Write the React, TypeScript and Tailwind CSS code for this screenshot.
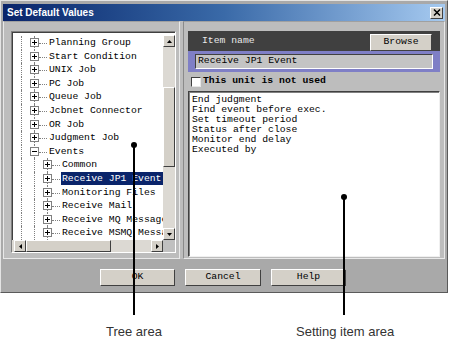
import React from "react"

const mono = "font-['Liberation_Mono',monospace] text-[9.75px]"

function PlusBox({ open }: { open?: boolean }) {
  return (
    <svg width="9" height="9" viewBox="0 0 9 9" className="block">
      <rect x="0.5" y="0.5" width="8" height="8" fill="#fff" stroke="#808080" />
      <path d="M2 4.5h5" stroke="#000" />
      {!open && <path d="M4.5 2v5" stroke="#000" />}
    </svg>
  )
}

type Node = { label: string; level: 0 | 1; open?: boolean; selected?: boolean }

const nodes: Node[] = [
  { label: "Planning Group", level: 0 },
  { label: "Start Condition", level: 0 },
  { label: "UNIX Job", level: 0 },
  { label: "PC Job", level: 0 },
  { label: "Queue Job", level: 0 },
  { label: "Jcbnet Connector", level: 0 },
  { label: "OR Job", level: 0 },
  { label: "Judgment Job", level: 0 },
  { label: "Events", level: 0, open: true },
  { label: "Common", level: 1 },
  { label: "Receive JP1 Event", level: 1, selected: true },
  { label: "Monitoring Files", level: 1 },
  { label: "Receive Mail", level: 1 },
  { label: "Receive MQ Message", level: 1 },
  { label: "Receive MSMQ Message", level: 1 },
]

function TreeRow({ node }: { node: Node }) {
  const child = node.level === 1
  return (
    <div className="relative h-[13.6px] whitespace-nowrap">
      <div className="absolute left-[9px] top-0 bottom-0 border-l border-dotted border-[#808080]" />
      <div className="absolute left-[22px] top-0 bottom-0 border-l border-dotted border-[#808080]" />
      {child && (
        <div className="absolute left-[35px] top-0 bottom-0 border-l border-dotted border-[#808080]" />
      )}
      <div
        className={
          child
            ? "absolute left-[40px] w-[8px] top-[7px] border-t border-dotted border-[#808080]"
            : "absolute left-[27px] w-[8px] top-[7px] border-t border-dotted border-[#808080]"
        }
      />
      <div className={child ? "absolute left-[31px] top-[2px]" : "absolute left-[18px] top-[2px]"}>
        <PlusBox open={node.open} />
      </div>
      <div
        className={
          (child ? "absolute left-[49px] top-0 " : "absolute left-[36px] top-0 ") +
          "h-[13px] leading-[13px] px-[1px] " +
          (node.selected ? "bg-[#0a246a] text-white pr-[20px]" : "text-black")
        }
      >
        {node.label}
      </div>
    </div>
  )
}

function ArrowBtn({ dir }: { dir: "up" | "down" | "left" | "right" }) {
  const d =
    dir === "up"
      ? "M2 6h5L4.5 3z"
      : dir === "down"
      ? "M2 3h5L4.5 6z"
      : dir === "left"
      ? "M6 2v5L3 4.5z"
      : "M3 2v5L6 4.5z"
  return (
    <div className="w-[12px] h-[12px] shrink-0 bg-[#d4d0c8] border border-t-white border-l-white border-r-[#404040] border-b-[#404040] flex items-center justify-center">
      <svg width="9" height="9" viewBox="0 0 9 9">
        <path d={d} fill="#000" />
      </svg>
    </div>
  )
}

function Button({ children, w }: { children: React.ReactNode; w: string }) {
  return (
    <div
      className={
        w +
        " h-[17px] bg-[#d4d0c8] border border-t-white border-l-white border-r-[#404040] border-b-[#404040] flex items-center justify-center text-black " +
        mono
      }
    >
      {children}
    </div>
  )
}

export default function App() {
  return (
    <div className="relative w-[451px] h-[349px] bg-white overflow-hidden">
      {/* dialog */}
      <div className="w-[448px] h-[293px] bg-[#a9a9a9] border border-t-[#e4e4e4] border-l-[#e4e4e4] border-r-[#5a5a5a] border-b-[#5a5a5a] px-[2px] pt-[3px] flex flex-col">
        <div className="h-[17px] bg-linear-to-r from-[#0a246a] via-[#3a6aa8] to-[#a6caf0] flex items-center justify-between pl-[4px] pr-[2px]">
          <span className="text-white font-bold text-[10px] font-['Liberation_Sans',Arial,sans-serif]">
            Set Default Values
          </span>
          <div className="w-[13px] h-[12px] bg-[#d4d0c8] border border-t-white border-l-white border-r-[#404040] border-b-[#404040] flex items-center justify-center">
            <svg width="8" height="7" viewBox="0 0 8 7">
              <path d="M1 0.5l6 6M7 0.5l-6 6" stroke="#000" strokeWidth="1.5" />
            </svg>
          </div>
        </div>

        {/* body */}
        <div className="h-[238px] flex bg-[#bdbdbd]">
          {/* tree area */}
          <div className="w-[177px] h-full border border-t-[#a0a0a0] border-l-[#e8e8e8] border-r-[#e8e8e8] border-b-[#e8e8e8] pt-[9px] pl-[7px]">
            <div className="w-[165px] h-[222px] border border-t-[#808080] border-l-[#808080] border-r-white border-b-white shadow-[inset_1px_1px_0_#404040] flex flex-col bg-white">
              <div className="flex h-[208px]">
                <div className={"flex-1 overflow-hidden pt-[4px] " + mono}>
                  {nodes.map((n) => (
                    <TreeRow key={n.label} node={n} />
                  ))}
                </div>
                <div className="w-[12px] flex flex-col bg-[#dcd9d3] mt-[3px]">
                  <ArrowBtn dir="up" />
                  <div className="h-[40px]" />
                  <div className="h-[80px] bg-[#d4d0c8] border border-t-white border-l-white border-r-[#404040] border-b-[#404040]" />
                  <div className="flex-1" />
                  <ArrowBtn dir="down" />
                </div>
              </div>
              <div className="flex h-[12px] bg-[#dcd9d3] pl-[2px]">
                <ArrowBtn dir="left" />
                <div className="w-[85px] bg-[#d4d0c8] border border-t-white border-l-white border-r-[#404040] border-b-[#404040]" />
                <div className="flex-1" />
                <ArrowBtn dir="right" />
                <div className="w-[12px] bg-[#c0c0c0]" />
              </div>
            </div>
          </div>

          {/* setting item area */}
          <div className="ml-[3px] w-[262px] h-full border border-t-[#a0a0a0] border-l-[#8a8a8a] border-r-[#e8e8e8] border-b-[#e8e8e8] pt-[9px] pl-[4px] pr-[4px] flex flex-col">
            <div className="h-[20px] bg-[#404040] flex items-center justify-between pl-[14px] pr-[8px]">
              <span className={"text-[#e8e8e8] " + mono}>Item name</span>
              <div className="mt-[3px] w-[62px] h-[17px] bg-[#d4d0c8] border border-t-white border-l-white border-r-[#404040] border-b-[#404040] flex items-center justify-center text-black">
                <span className={mono}>Browse</span>
              </div>
            </div>
            <div className="h-[21px] bg-[#7f7fc6] px-[7px] py-[3px]">
              <div className="h-full bg-[#c4c4c4] border border-t-[#404040] border-l-[#404040] border-r-white border-b-white flex items-center pl-[2px]">
                <span className={"text-black " + mono}>Receive JP1 Event</span>
              </div>
            </div>
            <div className="h-[19px] flex items-center gap-[2px] pl-[3px]">
              <div className="w-[10px] h-[10px] bg-white border border-t-[#404040] border-l-[#404040] border-r-[#e8e8e8] border-b-[#e8e8e8]" />
              <span className={"text-black font-bold " + mono}>This unit is not used</span>
            </div>
            <div className="flex-1 bg-white border border-t-[#404040] border-l-[#404040] border-r-[#f0f0f0] border-b-[#f0f0f0] shadow-[inset_1px_1px_0_#808080] pt-[3px] pl-[3px] mb-[1px]">
              <div className={"text-black leading-[10px] " + mono}>
                <div>End judgment</div>
                <div>Find event before exec.</div>
                <div>Set timeout period</div>
                <div>Status after close</div>
                <div>Monitor end delay</div>
                <div>Executed by</div>
              </div>
            </div>
          </div>
        </div>

        {/* buttons */}
        <div className="flex justify-center gap-[10px] pt-[10px] pr-[2px]">
          <Button w="w-[75px]">OK</Button>
          <Button w="w-[76px]">Cancel</Button>
          <Button w="w-[75px]">Help</Button>
        </div>
      </div>

      {/* labels */}
      <div className="flex mt-[31px] h-[15px] text-[13px] leading-[15px] text-[#333] font-['Liberation_Sans',Arial,sans-serif]">
        <div className="w-[296px] pl-[106px]">Tree area</div>
        <div>Setting item area</div>
      </div>

      {/* callout lines */}
      <div className="absolute left-[133px] top-[145px] w-[2px] h-[170px] bg-black" />
      <div className="absolute left-[131px] top-[142px] w-[6px] h-[6px] rounded-full bg-black" />
      <div className="absolute left-[343px] top-[197px] w-[2px] h-[118px] bg-black" />
      <div className="absolute left-[341px] top-[194px] w-[6px] h-[6px] rounded-full bg-black" />
    </div>
  )
}
